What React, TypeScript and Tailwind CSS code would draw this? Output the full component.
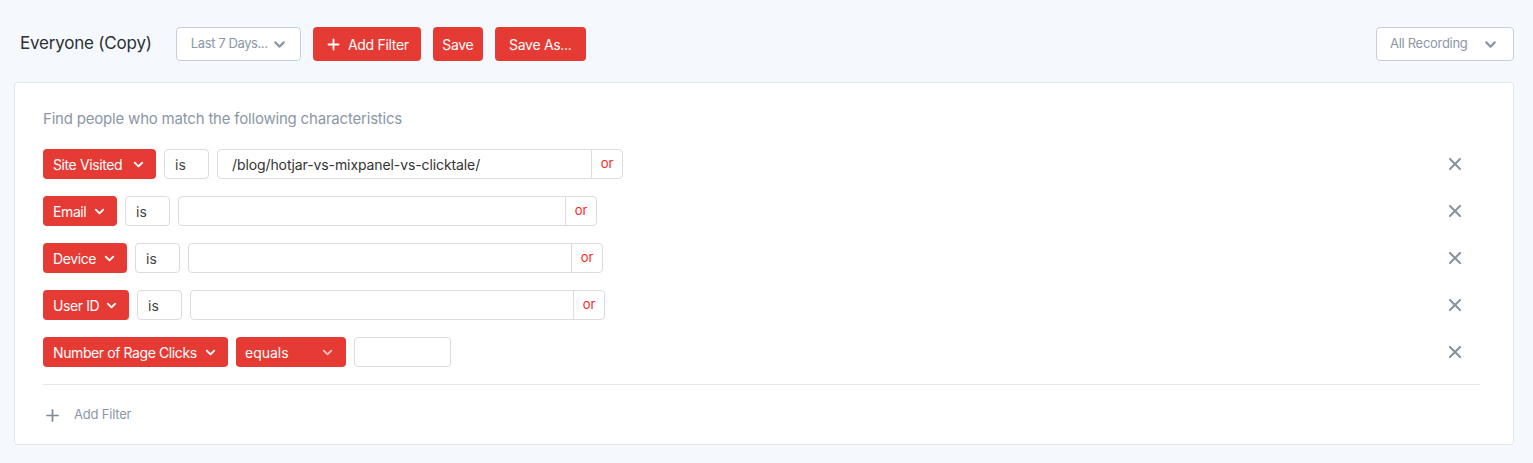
import React from 'react';
import { ChevronDown, Plus, X } from 'lucide-react';

type Row = {
  field: string;
  fieldW: string;
  op: string;
  inputW: string;
};

const rows: Row[] = [
  { field: 'Site Visited', fieldW: 'w-[113px]', op: 'is', inputW: 'w-[406px]' },
  { field: 'Email', fieldW: 'w-[74px]', op: 'is', inputW: 'w-[419px]' },
  { field: 'Device', fieldW: 'w-[84px]', op: 'is', inputW: 'w-[415px]' },
  { field: 'User ID', fieldW: 'w-[86px]', op: 'is', inputW: 'w-[415px]' },
];

const FieldButton: React.FC<{ label: string; width: string }> = ({ label, width }) => (
  <button className={`${width} h-[30px] flex items-center justify-between px-[10px] rounded-[4px] bg-[#e63b35] text-white text-[14px] tracking-[-0.4px]`}>
    <span>{label}</span>
    <ChevronDown className="w-[15px] h-[15px]" strokeWidth={3} />
  </button>
);

const RemoveIcon = () => (
  <X className="ml-auto mr-[14px] w-[20px] h-[20px] text-[#8a949e]" strokeWidth={2.6} />
);

export default function App() {
  return (
    <div className="min-h-[463px] bg-[#f5f9fd] pl-[14px] pr-[19px] pt-[27px] pb-[19px] font-['Inter',sans-serif]">
      {/* Header */}
      <div className="flex items-center h-[34px]">
        <h1 className="ml-[6px] text-[17px] text-[#2d2f33] tracking-[-0.2px] mr-[24px]">Everyone (Copy)</h1>
        <button className="w-[125px] h-[34px] flex items-center justify-between pl-[14px] pr-[12px] bg-white border border-[#c5cfdb] rounded-[4px] text-[13px] text-[#8b97a6] tracking-[-0.4px]">
          <span>Last 7 Days...</span>
          <ChevronDown className="w-[17px] h-[17px]" strokeWidth={3} />
        </button>
        <button className="ml-[12px] w-[108px] h-[34px] flex items-center justify-center gap-[6px] bg-[#e63b35] rounded-[4px] text-white text-[14px] tracking-[-0.3px]">
          <Plus className="w-[17px] h-[17px]" strokeWidth={2.6} />
          <span>Add Filter</span>
        </button>
        <button className="ml-[12px] w-[50px] h-[34px] bg-[#e63b35] rounded-[4px] text-white text-[14px] tracking-[-0.3px]">Save</button>
        <button className="ml-[12px] w-[91px] h-[34px] bg-[#e63b35] rounded-[4px] text-white text-[14px] tracking-[-0.3px]">Save As...</button>
        <button className="ml-auto w-[138px] h-[34px] flex items-center justify-between pl-[13px] pr-[14px] bg-white border border-[#c5cfdb] rounded-[4px] text-[13px] text-[#8b97a6] tracking-[-0.3px]">
          <span>All Recording</span>
          <ChevronDown className="w-[17px] h-[17px]" strokeWidth={3} />
        </button>
      </div>

      {/* Card */}
      <div className="mt-[21px] bg-white border border-[#e1e6ec] rounded-[4px] px-[28px] pt-[26px] pb-[20px]">
        <p className="text-[15px] text-[#8b97a6] tracking-[-0.2px] h-[20px] leading-[20px]">Find people who match the following characteristics</p>

        <div className="mt-[20px] flex flex-col gap-[17px] pr-[6px]">
          {rows.map((r) => (
            <div key={r.field} className="flex items-center h-[30px]">
              <FieldButton label={r.field} width={r.fieldW} />
              <div className="ml-[8px] w-[45px] h-[30px] flex items-center pl-[10px] border border-[#dcdcdc] rounded-[4px] text-[14px] text-[#444]">{r.op}</div>
              <div className={`ml-[8px] ${r.inputW} h-[30px] flex border border-[#dcdcdc] rounded-[4px]`}>
                <div className="flex-1 flex items-center pl-[14px] text-[14px] text-[#333] tracking-[-0.1px]">
                  {r.field === 'Site Visited' ? '/blog/hotjar-vs-mixpanel-vs-clicktale/' : ''}
                </div>
                <div className="w-[31px] border-l border-[#dcdcdc] flex items-center justify-center text-[13px] text-[#ff1f1f]">or</div>
              </div>
              <RemoveIcon />
            </div>
          ))}
          <div className="flex items-center h-[30px]">
            <FieldButton label="Number of Rage Clicks" width="w-[185px]" />
            <button className="ml-[8px] w-[110px] h-[30px] flex items-center justify-between pl-[9px] pr-[11px] rounded-[4px] bg-[#e63b35] text-white text-[14px]">
              <span>equals</span>
              <ChevronDown className="w-[15px] h-[15px] text-[#f4c4c2]" strokeWidth={3} />
            </button>
            <div className="ml-[8px] w-[97px] h-[30px] border border-[#dcdcdc] rounded-[4px]" />
            <RemoveIcon />
          </div>
        </div>

        <div className="mt-[17px] border-t border-[#e3e6ea] mr-[5px]" />

        <div className="mt-[21px] flex items-center h-[18px] text-[#7f8a97]">
          <Plus className="w-[19px] h-[19px]" strokeWidth={2.2} />
          <span className="ml-[12px] text-[13px] tracking-[-0.2px] text-[#8b97a6]">Add Filter</span>
        </div>
      </div>
    </div>
  );
}
